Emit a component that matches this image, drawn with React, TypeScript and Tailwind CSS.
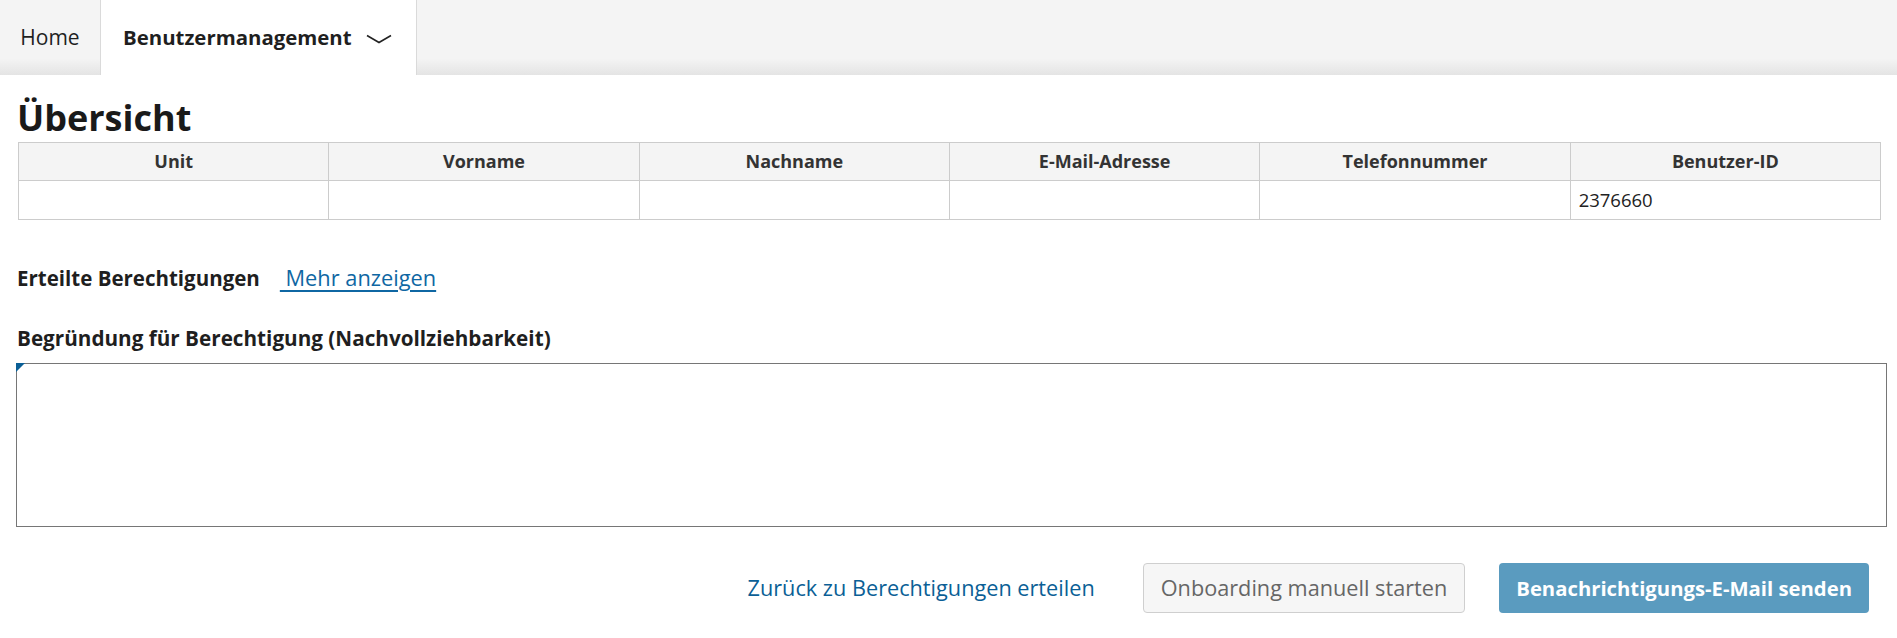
import React from "react";

const cols = ["Unit", "Vorname", "Nachname", "E-Mail-Adresse", "Telefonnummer", "Benutzer-ID"];
const vals = ["", "", "", "", "", "2376660"];

export default function App() {
  return (
    <div className="font-['Open_Sans',sans-serif] text-[#1f1f1f] bg-white min-h-[638px] w-full">
      <nav className="h-[75px] flex bg-[linear-gradient(to_bottom,#f4f4f4_78%,#e4e4e4)]">
        <div className="w-[100px] flex items-center justify-center text-[21px]">Home</div>
        <div className="w-[317px] bg-white border-l border-r border-[#dadada] flex items-center pl-[22px] font-bold text-[20.4px]">
          <span>Benutzermanagement</span>
          <svg className="ml-[14px] mt-[2px]" width="26" height="10" viewBox="0 0 26 10">
            <polyline points="1,1.5 13,8.5 25,1.5" fill="none" stroke="#222" strokeWidth="1.6" />
          </svg>
        </div>
      </nav>

      <main className="pl-[16px] pr-[13px]">
        <h1 className="mt-[23px] ml-[1px] text-[36px] leading-[40px] font-bold text-[#1a1a1a]">Übersicht</h1>

        <table className="mt-[4px] ml-[2px] w-[calc(100%-5px)] table-fixed border-collapse text-[18px]">
          <thead>
            <tr className="bg-[#f4f4f4]">
              {cols.map((c) => (
                <th key={c} className="border border-[#cccccc] h-[38px] font-bold text-[#333] text-center py-0">
                  {c}
                </th>
              ))}
            </tr>
          </thead>
          <tbody>
            <tr>
              {vals.map((v, i) => (
                <td key={i} className="border border-[#cccccc] h-[39px] px-[8px] text-[#222] text-[18.5px] py-0">
                  {v}
                </td>
              ))}
            </tr>
          </tbody>
        </table>

        <div className="mt-[44px] ml-[1px] flex items-center leading-[28px]">
          <span className="font-bold text-[20.5px]">Erteilte Berechtigungen</span>
          <a href="#" className="ml-[20px] text-[21.8px] text-[#0f67a3] underline underline-offset-[4px] decoration-[1.5px]">
            &nbsp;Mehr anzeigen
          </a>
        </div>

        <div className="mt-[32px] ml-[1px] text-[20.7px] leading-[28px] font-bold">
          Begründung für Berechtigung (Nachvollziehbarkeit)
        </div>

        <div className="relative mt-[11px] mr-[-3px]">
          <textarea className="block w-full h-[164px] border border-[#767676] resize-none outline-none" />
          <div className="absolute top-0 left-0 w-0 h-0 border-t-[9px] border-t-[#0a5f96] border-r-[9px] border-r-transparent" />
        </div>

        <div className="mt-[36px] mr-[15px] flex justify-end items-center">
          <a href="#" className="text-[21.7px] text-[#0b5f96]">Zurück zu Berechtigungen erteilen</a>
          <button className="ml-[48px] h-[50px] px-[17px] rounded-[4px] border border-[#cfcfcf] bg-[#f6f6f6] text-[#666] text-[21.7px]">
            Onboarding manuell starten
          </button>
          <button className="ml-[34px] h-[50px] px-[17px] rounded-[4px] bg-[#5a9bbf] text-white font-bold text-[20.3px]">
            Benachrichtigungs-E-Mail senden
          </button>
        </div>
      </main>
    </div>
  );
}
